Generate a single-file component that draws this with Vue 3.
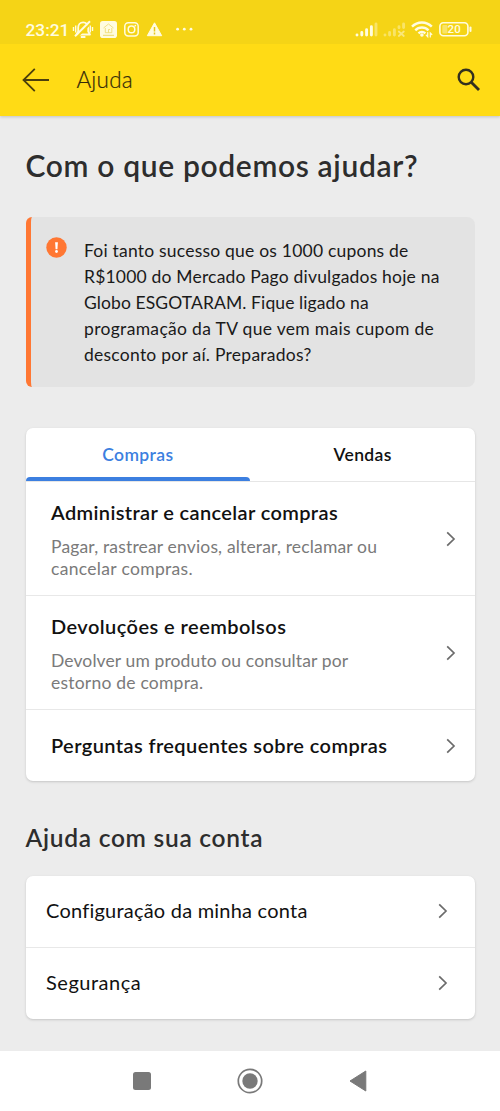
<script setup>
const alertLines = [
  { id: 'a1', text: 'Foi tanto sucesso que os 1000 cupons de' },
  { id: 'a2', text: 'R$1000 do Mercado Pago divulgados hoje na' },
  { id: 'a3', text: 'Globo ESGOTARAM. Fique ligado na' },
  { id: 'a4', text: 'programação da TV que vem mais cupom de' },
  { id: 'a5', text: 'desconto por aí. Preparados?' },
]
const purchases = [
  {
    id: 'p1',
    title: 'Administrar e cancelar compras',
    desc: [
      { id: 'd1', text: 'Pagar, rastrear envios, alterar, reclamar ou' },
      { id: 'd2', text: 'cancelar compras.' },
    ],
  },
  {
    id: 'p2',
    title: 'Devoluções e reembolsos',
    desc: [
      { id: 'd3', text: 'Devolver um produto ou consultar por' },
      { id: 'd4', text: 'estorno de compra.' },
    ],
  },
  { id: 'p3', title: 'Perguntas frequentes sobre compras', desc: [] },
]
const account = [
  { id: 'c1', title: 'Configuração da minha conta' },
  { id: 'c2', title: 'Segurança' },
]
</script>

<template>
  <div class="screen">
    <div class="status">
      <span class="clock">23:21</span>
      <svg class="status-left" width="130" height="24" viewBox="70 18 130 24" fill="none" stroke="#fffce0">
        <path d="M76.5 34.5h13.5l-1.8-3v-4a5 5 0 0 0-5-5.2c-3 0-5 2.2-5 5.2v4z" stroke-width="1.8" stroke-linejoin="round" />
        <path d="M80.8 37h4.6" stroke-width="2" />
        <path d="M77 37 91.5 22.5" stroke="#f5d416" stroke-width="2" />
        <path d="M75 36.2 90 21.2" stroke-width="2" />
        <path d="M73.5 27v4M75.7 25.5v7M90.3 25.5v7M92.5 27v4" stroke-width="1.4" />
        <rect x="100" y="21" width="17" height="17" rx="2.8" fill="#fffce0" stroke="none" />
        <path d="M103.5 28l5-4 5 4M105.300 28v4.700h6.500v-4.700M108.500 32.500v-3h1.500" stroke="#ecd96c" stroke-width=".8" />
        <path d="M103 35.300h11" stroke="#ecd96c" stroke-width="1" />
        <rect x="124.8" y="22.7" width="13.4" height="13.4" rx="3.5" stroke-width="1.5" />
        <circle cx="131.5" cy="29.4" r="3.3" stroke-width="1.5" />
        <circle cx="135.3" cy="25.6" r="0.9" fill="#fffce0" stroke="none" />
        <path d="M154.5 22.8 161.7 35.7h-14.4z" fill="#fffce0" stroke-linejoin="round" stroke-width="1" />
        <path d="M154.5 27v4.5M154.5 32.6v1.8" stroke="#e6c51c" stroke-width="1.5" />
        <g fill="#fffce0" stroke="none">
          <circle cx="177.6" cy="29.2" r="1.4" />
          <circle cx="184.3" cy="29.2" r="1.4" />
          <circle cx="191" cy="29.2" r="1.4" />
        </g>
      </svg>
      <svg class="status-right" width="120" height="24" viewBox="353 18 120 24" fill="none" stroke="#fffce0" stroke-linecap="round">
        <g stroke-width="2.9">
          <path d="M357 35v.1M361.8 32.5v2.6M366.6 29.7v5.4M371.4 26.8v8.3" />
          <path d="M376 24v11.1" opacity=".4" />
          <path d="M385 35v.1M389.6 32.5v2.6M394.4 29.7v5.4M399 26.8v1M403.6 24v3.5" opacity=".4" />
        </g>
        <path d="M398.8 31.5l5 4.5M403.8 31.5l-5 4.5" opacity=".5" stroke-width="1.8" />
        <path d="M412 26.7a13.7 13.7 0 0 1 19.8 0M415.3 30.3a9.3 9.3 0 0 1 13.2 0M418.5 33.3a4.7 4.7 0 0 1 6.8 0" stroke-width="2.4" stroke-linecap="butt" />
        <circle cx="421.9" cy="35" r="1.8" fill="#fffce0" stroke="none" />
        <path d="M427.7 32.7v4l-1.5-1.5M430.3 37v-4l1.5 1.500" stroke-width="1.2" />
        <rect x="439.9" y="22.7" width="28" height="13" rx="3.5" stroke-width="1.6" />
        <path d="M470.5 27.5v3.5" stroke-width="2" />
        <rect x="442.3" y="25" width="5" height="8.5" rx="1" fill="#fffce0" stroke="none" opacity=".4" />
        <text class="batt" x="447.6" y="33.2" fill="#fffce0" stroke="none">20</text>
      </svg>
    </div>
    <header class="bar">
      <svg class="back" width="28" height="26" viewBox="0 0 28 26" fill="none" stroke="#4b3f0c" stroke-width="1.8">
        <path d="M27 13H1.5M12.8 1.8 1.5 13 12.8 24.2" />
      </svg>
      <span class="bar-title">Ajuda</span>
      <svg class="search" width="24" height="24" viewBox="0 0 24 24" fill="none" stroke="#33301f">
        <circle cx="9" cy="9" r="7.3" stroke-width="2.4" />
        <path d="M14.5 14.5 22 22" stroke-width="2.8" />
      </svg>
    </header>

    <main>
      <h1>Com o que podemos ajudar?</h1>

      <section class="alert">
        <svg class="alert-icon" width="21" height="21" viewBox="0 0 21 21">
          <circle cx="10.5" cy="10.5" r="10.2" fill="#ff7733" />
          <path d="M9.1 5.2h2.8l-.5 7H9.6z" fill="#fff" />
          <circle cx="10.5" cy="14.5" r="1.4" fill="#fff" />
        </svg>
        <p>
          <span v-for="l in alertLines" :key="l.id" class="line" :class="l.id">{{ l.text }}</span>
        </p>
      </section>

      <section class="card purchases">
        <nav class="tabs">
          <span class="tab active">Compras</span>
          <span class="tab sales">Vendas</span>
        </nav>
        <div v-for="r in purchases" :key="r.id" class="row" :class="r.id">
          <div class="copy">
            <h3>{{ r.title }}</h3>
            <p v-if="r.desc.length" class="desc">
              <span v-for="l in r.desc" :key="l.id" class="line" :class="l.id">{{ l.text }}</span>
            </p>
          </div>
          <svg class="chev" width="10" height="16" viewBox="0 0 10 16"><path d="M1.2 1.3 8 8l-6.8 6.700" /></svg>
        </div>
      </section>

      <h2>Ajuda com sua conta</h2>

      <section class="card account">
        <div v-for="r in account" :key="r.id" class="row" :class="r.id">
          <span>{{ r.title }}</span>
          <svg class="chev" width="10" height="16" viewBox="0 0 10 16"><path d="M1.2 1.3 8 8l-6.8 6.700" /></svg>
        </div>
      </section>
    </main>

    <footer class="nav">
      <svg width="18" height="18" viewBox="0 0 18 18"><rect width="18" height="18" rx="2.5" fill="#797979" /></svg>
      <svg width="26" height="26" viewBox="0 0 26 26">
        <circle cx="13" cy="13" r="11.7" fill="none" stroke="#797979" stroke-width="1.7" />
        <circle cx="13" cy="13" r="7.7" fill="#797979" />
      </svg>
      <svg width="18" height="22" viewBox="0 0 18 22"><path d="M1 11 16.8 1v20z" fill="#797979" stroke="#797979" stroke-linejoin="round" /></svg>
    </footer>
  </div>
</template>

<style>
body { margin: 0; background: #ececec; }
</style>
<style scoped>
.screen {
  display: flex;
  flex-direction: column;
  width: 500px;
  height: 1111px;
  overflow: hidden;
  background: #ececec;
  color: #111;
  font-family: Lato, "Liberation Sans", sans-serif;
}
h1, h2, h3, p { margin: 0; }
.line { display: block; white-space: nowrap; }
.status {
  position: relative;
  z-index: 1;
  flex: none;
  display: flex;
  align-items: flex-start;
  box-sizing: border-box;
  height: 44px;
  padding: 18px 27px 0 25.5px;
  background: #f5d416;
}
.clock {
  width: 44.5px;
  font: 500 17.3px/24px Roboto, sans-serif;
  color: #fffce0;
}
.status-right { margin-left: auto; }
.batt { font: 500 11.5px Roboto, sans-serif; }
.bar {
  flex: none;
  display: flex;
  align-items: center;
  box-sizing: border-box;
  height: 72px;
  padding: 0 19px 0 22px;
  background: #ffdb15;
  box-shadow: 0 1px 3px rgba(0, 0, 0, .18);
}
.bar-title {
  margin: -1px 0 0 26.5px;
  font-size: 22.5px;
  font-weight: 300;
  line-height: 28px;
  letter-spacing: .2px;
  color: #33290a;
  -webkit-text-stroke: .2px #33290a;
}
.search { margin-left: auto; }
main { flex: 1; padding: 31px 25px 0 25.5px; }
h1 {
  font-size: 30px;
  line-height: 36px;
  font-weight: 600;
  letter-spacing: .65px;
  color: #2d2d2d;
}
.alert {
  display: flex;
  box-sizing: border-box;
  height: 170px;
  margin-top: 34px;
  padding: 20px 0 0 15px;
  border-left: 5px solid #ff7733;
  border-radius: 6px 8px 8px 6px;
  background: #e3e3e3;
}
.alert-icon { flex: none; margin-right: 17.5px; }
.alert p { margin-top: 1px; font-size: 17.5px; line-height: 26px; color: #1a1a1a; }
.a1 { letter-spacing: .21px; }
.a2 { letter-spacing: .19px; }
.a3 { letter-spacing: .1px; }
.a4 { letter-spacing: .32px; }
.a5 { letter-spacing: .25px; }
.card {
  border-radius: 7px;
  background: #fff;
  box-shadow: 0 1px 2.5px rgba(0, 0, 0, .17);
}
.purchases { margin-top: 41px; }
.tabs {
  display: flex;
  box-sizing: border-box;
  height: 54px;
  border-bottom: 1px solid #e6e6e6;
}
.tab {
  position: relative;
  flex: 1;
  text-align: center;
  font-size: 17.5px;
  font-weight: 600;
  line-height: 53px;
  letter-spacing: .38px;
}
.active { color: #3c7fdf; }
.active::after {
  content: "";
  position: absolute;
  left: 0;
  right: 0;
  bottom: 0;
  height: 4px;
  border-radius: 4px 4px 0 0;
  background: #3c7fe0;
}
.row {
  display: flex;
  align-items: center;
  justify-content: space-between;
  box-sizing: border-box;
  border-bottom: 1px solid #e8e8e8;
}
.row:last-child { border-bottom: 0; }
.purchases .row { height: 114px; padding: 0 19.5px 0 25.5px; }
.purchases .row:last-child { height: 71px; }
h3 { font-size: 20px; line-height: 24px; font-weight: 600; }
.p1 .copy, .p2 .copy { margin-top: 2px; }
.p3 .copy { margin-top: -2px; }
.p1 h3 { letter-spacing: .37px; }
.p2 h3 { letter-spacing: .44px; }
.p3 h3 { letter-spacing: .4px; }
.desc { margin-top: 12px; font-size: 17.5px; line-height: 21.4px; color: #7a7a7a; }
.d1 { letter-spacing: .16px; }
.d2 { letter-spacing: .32px; }
.d3 { letter-spacing: .11px; }
.d4 { letter-spacing: .22px; }
.chev { flex: none; fill: none; stroke: #6b6b6b; stroke-width: 1.7; }
h2 {
  margin-top: 42px;
  font-size: 24.5px;
  line-height: 30px;
  font-weight: 600;
  letter-spacing: .72px;
  color: #2d2d2d;
}
.account { margin-top: 22.5px; }
.account .row { height: 72px; padding: 0 27.5px 0 20.5px; font-size: 20px; line-height: 24px; }
.account .row:last-child { height: 71.5px; }
.account span { margin-top: -2px; }
.account .c1 { letter-spacing: .22px; }
.account .c2 { letter-spacing: .52px; }
.nav {
  flex: none;
  display: flex;
  justify-content: center;
  align-items: center;
  gap: 86px;
  box-sizing: border-box;
  height: 60.5px;
  padding-right: 1px;
  background: #fff;
}
</style>
